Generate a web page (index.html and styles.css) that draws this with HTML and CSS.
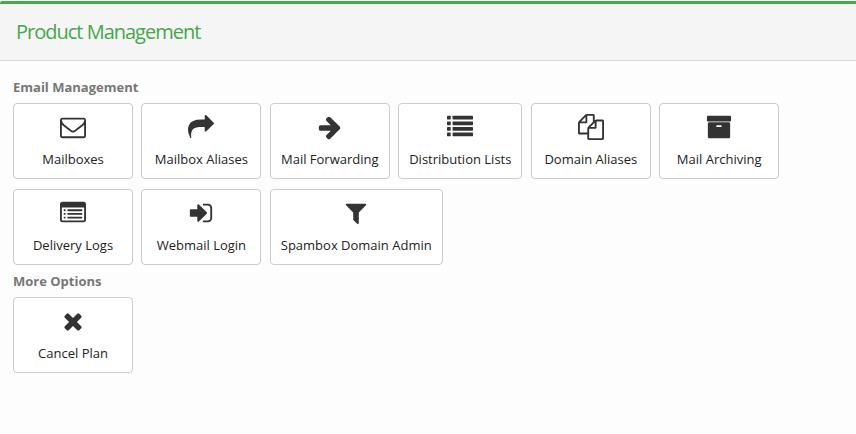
FILE: index.html
```html
<!DOCTYPE html>
<html lang="en">
<head>
<meta charset="utf-8">
<title>Product Management</title>
<link rel="stylesheet" href="styles.css">
</head>
<body>
<main class="panel">
  <header class="panel-header">
    <h1 class="panel-title">Product Management</h1>
  </header>
  <div class="panel-body">
    <section>
      <h2 class="section-title">Email Management</h2>
      <nav class="tiles" aria-label="Email Management">
        <a class="tile" href="#"><svg class="icon" viewBox="0 0 1792 1792" aria-hidden="true"><path d="M1664 1504v-768q-32 36-69 66-268 206-426 338-51 43-83 67t-86.5 48.5-102.5 24.5h-2q-48 0-102.5-24.5t-86.5-48.5-83-67q-158-132-426-338-37-30-69-66v768q0 13 9.5 22.5t22.5 9.5h1472q13 0 22.5-9.5t9.5-22.5zm0-1051v-24.5l-.5-13-3-12.5-5.5-9-9-7.5-14-2.5h-1472q-13 0-22.5 9.5t-9.5 22.5q0 168 147 284 193 152 401 317 6 5 35 29.5t46 37.5 44.5 31.5 50.5 27.5 43 9h2q20 0 43-9t50.5-27.5 44.5-31.5 46-37.5 35-29.5q208-165 401-317 54-43 100.5-115.5t46.5-131.5zm128-37v1088q0 66-47 113t-113 47h-1472q-66 0-113-47t-47-113v-1088q0-66 47-113t113-47h1472q66 0 113 47t47 113z"/></svg><span>Mailboxes</span></a>
        <a class="tile" href="#"><svg class="icon" viewBox="0 0 1792 1792" aria-hidden="true"><path d="M1792 640q0 26-19 45l-512 512q-19 19-45 19t-45-19-19-45v-256h-224q-98 0-175.5 6t-154 21.5-133 42.5-105.5 69.5-80 101-48.5 138.5-17.5 181q0 55 5 123 0 6 2.5 23.5t2.5 26.5q0 15-8.5 25t-23.5 10q-16 0-28-17-7-9-13-22t-13.5-30-10.5-24q-127-285-127-451 0-199 53-333 162-403 875-403h224v-256q0-26 19-45t45-19 45 19l512 512q19 19 19 45z"/></svg><span>Mailbox Aliases</span></a>
        <a class="tile" href="#"><svg class="icon" viewBox="0 0 1792 1792" aria-hidden="true"><path d="M1600 960q0 54-37 91l-651 651q-39 37-91 37-51 0-90-37l-75-75q-38-38-38-91t38-91l293-293h-704q-52 0-84.5-37.5t-32.5-90.5v-128q0-53 32.5-90.5t84.5-37.5h704l-293-294q-38-36-38-90t38-90l75-75q38-38 90-38 53 0 91 38l651 651q37 35 37 90z"/></svg><span>Mail Forwarding</span></a>
        <a class="tile" href="#"><svg class="icon" viewBox="0 0 1792 1792" aria-hidden="true"><rect x="0" y="128" width="256" height="256" rx="32"/><rect x="384" y="128" width="1408" height="256" rx="32"/><rect x="0" y="512" width="256" height="256" rx="32"/><rect x="384" y="512" width="1408" height="256" rx="32"/><rect x="0" y="896" width="256" height="256" rx="32"/><rect x="384" y="896" width="1408" height="256" rx="32"/><rect x="0" y="1280" width="256" height="256" rx="32"/><rect x="384" y="1280" width="1408" height="256" rx="32"/></svg><span>Distribution Lists</span></a>
        <a class="tile" href="#"><svg class="icon" viewBox="0 0 1792 1792" aria-hidden="true"><path d="M1696 384q40 0 68 28t28 68v1216q0 40-28 68t-68 28h-960q-40 0-68-28t-28-68v-288h-544q-40 0-68-28t-28-68v-672q0-40 20-88t48-76l408-408q28-28 76-48t88-20h416q40 0 68 28t28 68v328q68-40 128-40h416zm-544 213l-299 299h299v-299zm-640-384l-299 299h299v-299zm196 647l316-316v-416h-384v416q0 40-28 68t-68 28h-416v640h512v-256q0-40 20-88t48-76zm956 804v-1152h-384v416q0 40-28 68t-68 28h-416v640h896z"/></svg><span>Domain Aliases</span></a>
        <a class="tile" href="#"><svg class="icon" viewBox="0 0 1792 1792" aria-hidden="true"><path d="M1088 832q0-26-19-45t-45-19h-256q-26 0-45 19t-19 45 19 45 45 19h256q26 0 45-19t19-45zm576-192v960q0 26-19 45t-45 19h-1408q-26 0-45-19t-19-45v-960q0-26 19-45t45-19h1408q26 0 45 19t19 45zm64-448v256q0 26-19 45t-45 19h-1536q-26 0-45-19t-19-45v-256q0-26 19-45t45-19h1536q26 0 45 19t19 45z"/></svg><span>Mail Archiving</span></a>
        <a class="tile" href="#"><svg class="icon" viewBox="0 0 1792 1792" aria-hidden="true"><rect x="256" y="640" width="128" height="128" rx="32"/><rect x="512" y="640" width="1024" height="128" rx="32"/><rect x="256" y="896" width="128" height="128" rx="32"/><rect x="512" y="896" width="1024" height="128" rx="32"/><rect x="256" y="1152" width="128" height="128" rx="32"/><rect x="512" y="1152" width="1024" height="128" rx="32"/><path d="M1664 1376v-832q0-13-9.5-22.5t-22.5-9.5h-1472q-13 0-22.5 9.5t-9.5 22.5v832q0 13 9.5 22.5t22.5 9.5h1472q13 0 22.5-9.5t9.5-22.5zm128-1088v1088q0 66-47 113t-113 47h-1472q-66 0-113-47t-47-113v-1088q0-66 47-113t113-47h1472q66 0 113 47t47 113z"/></svg><span>Delivery Logs</span></a>
        <a class="tile" href="#"><svg class="icon" viewBox="0 0 1792 1792" aria-hidden="true"><path d="M1312 896q0 26-19 45l-544 544q-19 19-45 19t-45-19-19-45v-288h-448q-26 0-45-19t-19-45v-384q0-26 19-45t45-19h448v-288q0-26 19-45t45-19 45 19l544 544q19 19 19 45zm352-352v704q0 119-84.5 203.5t-203.5 84.5h-320q-13 0-22.5-9.5t-9.5-22.5q0-4-1-20t-.5-26.5 3-23.5 10-19.5 20.5-6.5h320q66 0 113-47t47-113v-704q0-66-47-113t-113-47h-312l-11.5-1-11.5-3-8-5.5-7-9-2-13.5q0-4-1-20t-.5-26.5 3-23.5 10-19.5 20.5-6.5h320q119 0 203.5 84.5t84.5 203.5z"/></svg><span>Webmail Login</span></a>
        <a class="tile" href="#"><svg class="icon" viewBox="0 0 1792 1792" aria-hidden="true"><path d="M1595 295q17 41-14 70l-493 493v742q0 42-39 59-13 5-25 5-27 0-45-19l-256-256q-19-19-19-45v-486l-493-493q-31-29-14-70 17-39 59-39h1280q42 0 59 39z"/></svg><span>Spambox Domain Admin</span></a>
      </nav>
    </section>
    <section>
      <h2 class="section-title">More Options</h2>
      <nav class="tiles" aria-label="More Options">
        <a class="tile" href="#"><svg class="icon" viewBox="0 0 1792 1792" aria-hidden="true"><path d="M1490 1322q0 40-28 68l-136 136q-28 28-68 28t-68-28l-294-294-294 294q-28 28-68 28t-68-28l-136-136q-28-28-28-68t28-68l294-294-294-294q-28-28-28-68t28-68l136-136q28-28 68-28t68 28l294 294 294-294q28-28 68-28t68 28l136 136q28 28 28 68t-28 68l-294 294 294 294q28 28 28 68z"/></svg><span>Cancel Plan</span></a>
      </nav>
    </section>
  </div>
</main>
</body>
</html>
```
FILE: styles.css
```css
* {
  box-sizing: border-box;
}

body {
  margin: 0;
  background: #fdfdfd;
  color: #333;
  font: 13px/20px "Open Sans", sans-serif;
}

.panel {
  margin-top: 1px;
  border-top: 3px solid #46a74b;
  border-top-left-radius: 2px;
}

.panel-header {
  padding: 14px 16px;
  background: #f5f5f5;
  border-bottom: 1px solid #d9d9d9;
}

.panel-title {
  margin: 0;
  color: #46a74b;
  font-size: 20px;
  font-weight: 400;
  line-height: 28px;
  letter-spacing: -1px;
}

.panel-body {
  padding: 20px 13px;
}

.section-title {
  margin: 0 0 10px;
  color: #777;
  font-size: 13px;
  font-weight: 700;
  line-height: 12px;
}

.tile {
  display: inline-block;
  min-width: 120px;
  height: 76px;
  margin: 0 5px 10px 0;
  padding: 10px;
  background: #fff;
  border: 1px solid #ccc;
  border-radius: 4px;
  color: #222;
  text-align: center;
  text-decoration: none;
  vertical-align: top;
}

.icon {
  display: block;
  width: 26px;
  height: 26px;
  margin: 0 auto 9px;
  fill: #333;
}
```
